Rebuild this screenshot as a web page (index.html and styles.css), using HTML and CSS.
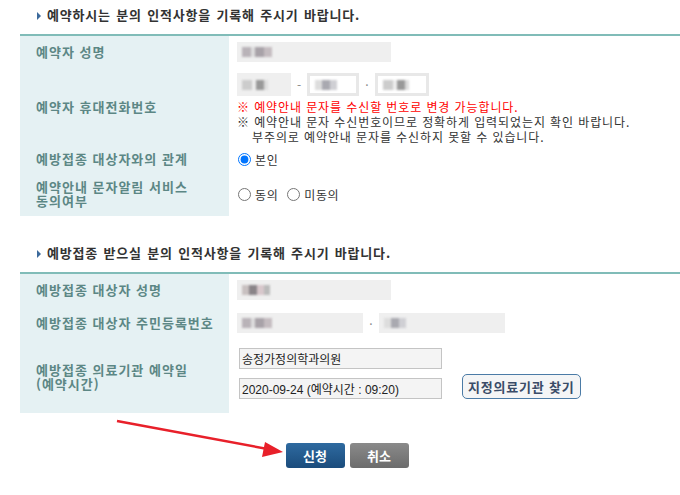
FILE: index.html
```html
<!DOCTYPE html>
<html lang="ko">
<head>
  <meta charset="UTF-8">
  <title>예방접종 예약</title>
  <link rel="stylesheet" href="styles.css">
</head>
<body>

  <div class="page">
    <h3 class="sec-title">예약하시는 분의 인적사항을 기록해 주시기 바랍니다.</h3>

    <div class="form-table">
      <div class="row h32">
        <div class="th">예약자 성명</div>
        <div class="td">
          <div class="mask w154"><span class="smudge s1"></span></div>
        </div>
      </div>

      <div class="row h78">
        <div class="th">예약자 휴대전화번호</div>
        <div class="td td-phone">
          <div class="phone">
            <div class="mask w54"><span class="smudge s2"></span></div>
            <span class="sep">-</span>
            <div class="mask mask-open w52"><span class="smudge s3"></span></div>
            <span class="sep">·</span>
            <div class="mask mask-open w54"><span class="smudge s2"></span></div>
          </div>
          <p class="notice red">※ 예약안내 문자를 수신할 번호로 변경 가능합니다.</p>
          <p class="notice">※ 예약안내 문자 수신번호이므로 정확하게 입력되었는지 확인 바랍니다.</p>
          <p class="notice indent">부주의로 예약안내 문자를 수신하지 못할 수 있습니다.</p>
        </div>
      </div>

      <div class="row h26">
        <div class="th">예방접종 대상자와의 관계</div>
        <div class="td">
          <label class="radio"><input type="radio" name="rel" checked>본인</label>
        </div>
      </div>

      <div class="row h44">
        <div class="th th-multi">
          <span class="line">예약안내 문자알림 서비스</span>
          <span class="line">동의여부</span>
        </div>
        <div class="td">
          <label class="radio"><input type="radio" name="agree">동의</label>
          <label class="radio"><input type="radio" name="agree">미동의</label>
        </div>
      </div>
    </div>

    <h3 class="sec-title sec-second">예방접종 받으실 분의 인적사항을 기록해 주시기 바랍니다.</h3>

    <div class="form-table">
      <div class="row h32">
        <div class="th">예방접종 대상자 성명</div>
        <div class="td">
          <div class="mask w154"><span class="smudge s4"></span></div>
        </div>
      </div>

      <div class="row h34">
        <div class="th">예방접종 대상자 주민등록번호</div>
        <div class="td">
          <div class="mask w126"><span class="smudge s1"></span></div>
          <span class="sep">·</span>
          <div class="mask w126"><span class="smudge s3"></span></div>
        </div>
      </div>

      <div class="row h73">
        <div class="th th-multi">
          <span class="line">예방접종 의료기관 예약일</span>
          <span class="line">(예약시간)</span>
        </div>
        <div class="td td-clinic">
          <input class="field" type="text" value="송정가정의학과의원" readonly>
          <div class="clinic-line">
            <input class="field" type="text" value="2020-09-24 (예약시간 : 09:20)" readonly>
            <button type="button" class="btn-find">지정의료기관 찾기</button>
          </div>
        </div>
      </div>
    </div>

    <div class="actions">
      <button type="button" class="btn btn-ok">신청</button>
      <button type="button" class="btn btn-cancel">취소</button>
    </div>

    <svg class="arrow" width="180" height="50" viewBox="0 0 180 50">
      <line x1="2" y1="5" x2="158" y2="34" stroke="#e8202a" stroke-width="2.4"/>
      <polygon points="168,36 150,26 147,41" fill="#e8202a"/>
    </svg>
  </div>

</body>
</html>
```

FILE: styles.css
```css
body {
  margin: 0;
  font-family: "Noto Sans CJK KR", "Liberation Sans", sans-serif;
  background: #fff;
  color: #333;
}

.page {
  position: relative;
  width: 680px;
  height: 495px;
}

.sec-title {
  margin: 0;
  height: 34px;
  line-height: 30px;
  padding-left: 37px;
  font-size: 13px;
  font-weight: bold;
  color: #333;
  letter-spacing: 0.8px;
  word-spacing: 1px;
}

.sec-title::before {
  content: "";
  display: inline-block;
  border-left: 4px solid #3c6a9c;
  border-top: 4px solid transparent;
  border-bottom: 4px solid transparent;
  margin-right: 6px;
  vertical-align: 0;
}

.sec-second {
  margin-top: 22px;
}

.form-table {
  margin-left: 20px;
  border-top: 2px solid #80bcb8;
}

.row {
  display: grid;
  grid-template-columns: 209px 1fr;
}

.h26 { min-height: 26px; }
.h32 { min-height: 32px; }
.h34 { min-height: 34px; }
.h44 { min-height: 44px; }
.h73 { min-height: 73px; }
.h78 { min-height: 78px; }

.th {
  background: #e5f1f3;
  padding-left: 16px;
  display: flex;
  align-items: center;
  font-size: 13px;
  font-weight: bold;
  line-height: 14px;
  letter-spacing: 1px;
  color: #5c8785;
}

.th-multi {
  flex-direction: column;
  align-items: flex-start;
  justify-content: center;
}

.th-multi .line {
  display: block;
  height: 14px;
  line-height: 14px;
}

.td {
  padding-left: 8px;
  display: flex;
  align-items: center;
  font-size: 12px;
}

/* blurred personal data */
.mask {
  height: 20px;
  background: #efefef;
  display: flex;
  align-items: center;
  padding-left: 5px;
  box-sizing: border-box;
}

.mask-open {
  background: #fff;
  border: 3px solid #e8e8e8;
}

.w52 { width: 52px; }
.w54 { width: 54px; }
.w126 { width: 126px; }
.w154 { width: 154px; }

.smudge {
  display: block;
  height: 10px;
  filter: blur(1.2px);
}

.s1 { width: 30px; background: linear-gradient(90deg, #b9b3b8 0 30%, #ddd 30% 45%, #a8a2a8 45% 75%, #c4bcc0 75%); }
.s2 { width: 26px; background: linear-gradient(90deg, #ccc 0 40%, #eee 40% 55%, #999 55% 85%, #ddd 85%); }
.s3 { width: 22px; background: linear-gradient(90deg, #ddd 0 30%, #a9a9b0 30% 70%, #cfcfd4 70%); }
.s4 { width: 28px; background: linear-gradient(90deg, #c8c0c0 0 25%, #8a8488 25% 55%, #d8c8cc 55% 80%, #bbb 80%); }

.sep {
  width: 16px;
  text-align: center;
  color: #888;
  font-size: 12px;
}

.td-phone {
  flex-direction: column;
  align-items: flex-start;
  justify-content: flex-start;
  padding-top: 5px;
}

.phone {
  display: flex;
  align-items: center;
  height: 23px;
  margin-bottom: 3px;
}

.phone .mask {
  height: 23px;
}

.notice {
  margin: 0;
  height: 15px;
  line-height: 15px;
  font-size: 12px;
  letter-spacing: 0.9px;
  color: #333;
  white-space: nowrap;
}

.notice.red {
  color: #f00;
}

.notice.indent {
  padding-left: 15px;
}

.radio {
  display: inline-flex;
  align-items: center;
  margin-right: 8px;
  font-size: 12px;
  letter-spacing: 0.6px;
  color: #333;
}

.radio input {
  margin: 0 4px 0 1px;
  width: 13px;
  height: 13px;
}

.td-clinic {
  flex-direction: column;
  align-items: flex-start;
  justify-content: flex-start;
  padding-top: 8px;
  padding-left: 10px;
}

.field {
  width: 203px;
  height: 21px;
  box-sizing: border-box;
  border: 1px solid #c4c4c4;
  background: #f4f4f4;
  padding: 0 2px;
  font-family: "Liberation Sans", "Noto Sans CJK KR", sans-serif;
  font-size: 12px;
  color: #222;
  margin-bottom: 9px;
}

.clinic-line {
  display: flex;
  align-items: flex-start;
}

.btn-find {
  margin-left: 20px;
  margin-top: -4px;
  height: 25px;
  padding: 0 5px;
  border: 1px solid #4b7ba6;
  border-radius: 5px;
  background: #f4f5f6;
  font-family: "Noto Sans CJK KR", sans-serif;
  font-size: 13px;
  font-weight: bold;
  letter-spacing: 0.8px;
  color: #3a4c68;
}

.actions {
  display: flex;
  justify-content: center;
  gap: 5px;
  margin-top: 30px;
  padding-left: 14px;
}

.btn {
  width: 59px;
  height: 25px;
  border: none;
  border-radius: 3px;
  font-family: "Noto Sans CJK KR", sans-serif;
  font-size: 13px;
  font-weight: bold;
  color: #fff;
}

.btn-ok {
  background: linear-gradient(#2e6aa0, #1b4c7c);
}

.btn-cancel {
  background: linear-gradient(#8a8a8a, #6c6c6c);
}

.arrow {
  position: absolute;
  left: 115px;
  top: 416px;
}
```
